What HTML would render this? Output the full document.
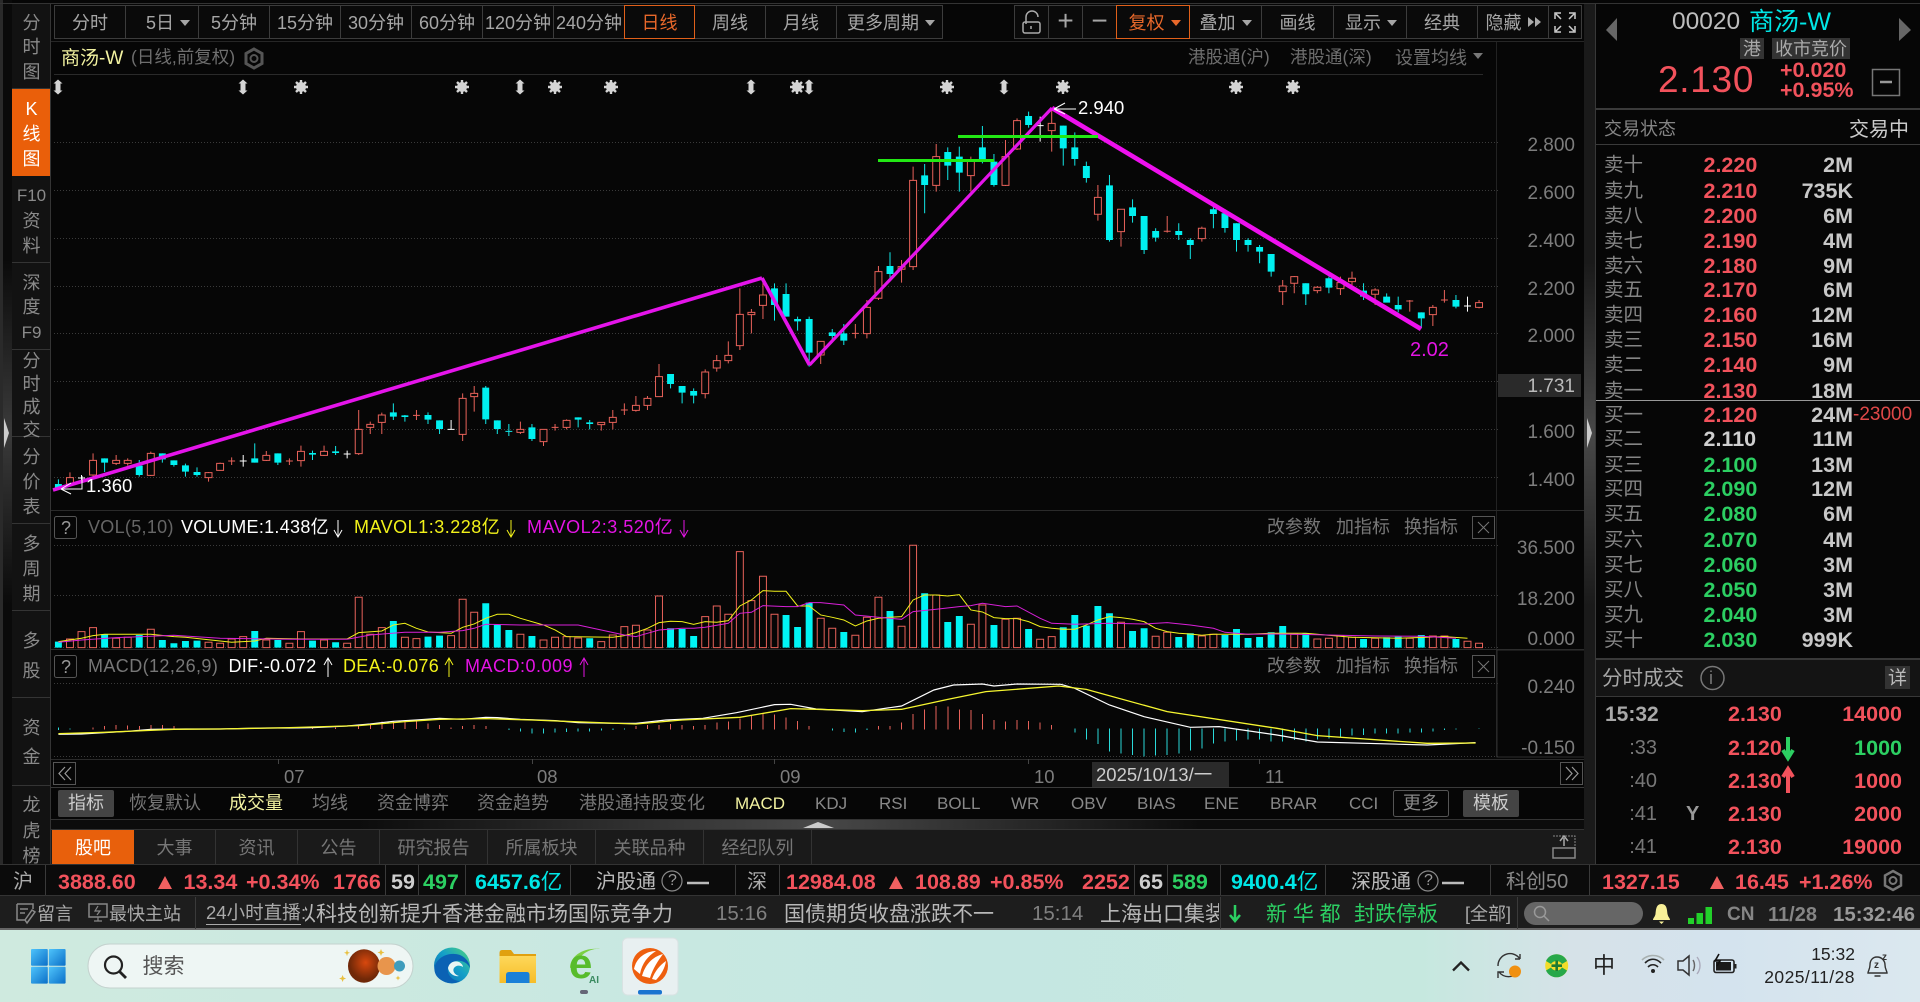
<!DOCTYPE html>
<html lang="zh"><head><meta charset="utf-8"><title>商汤-W</title>
<style>
*{box-sizing:border-box;margin:0;padding:0}
html,body{width:1920px;height:1002px;overflow:hidden;background:#060606}
body{position:relative;font-family:"Liberation Sans","Noto Sans CJK SC",sans-serif;color:#a6a6a6}
.t{position:absolute;white-space:nowrap;line-height:1;font-size:18px}
.a{position:absolute}
.b{position:absolute;top:5px;height:34px;border:1px solid #3c3c3c;background:#0a0a0a;text-align:center;line-height:34px;font-size:18px;color:#a6a6a6;white-space:nowrap;overflow:hidden}
.c{display:inline-block;width:0;height:0;border:5px solid transparent;border-top:6px solid currentColor;border-bottom:0;vertical-align:3px;margin-left:6px}
.rr{display:inline-block;width:0;height:0;border:5.5px solid transparent;border-left:6px solid #aaa;border-right:0;vertical-align:2px;margin-left:1px}
.s{position:absolute;left:12px;width:39px;text-align:center;font-size:18px;line-height:1;color:#8a8a8a}
.sc{position:absolute;left:12px;width:38px;background:#121212;border-bottom:1px solid #343434}
.ax{position:absolute;right:345px;font-size:19px;line-height:1;color:#7d7d7d;white-space:nowrap}
.ob{position:absolute;left:1604px;width:316px;height:22px;line-height:22px;white-space:nowrap}
.ob span{position:absolute;top:0}
.ob .l{left:0;font-size:19.5px;color:#858585}
.ob .p{left:99.5px;font-size:21.5px;font-weight:bold}
.ob .v{right:67px;font-size:21.5px;font-weight:bold;color:#c8c8c8}
.R{color:#f2525c}.G{color:#2ccf62}.W{color:#cfcfcf}.Y{color:#f2f2a0}.C{color:#00e6e6}
.m{font-weight:bold;font-size:21.5px}
.ft{position:absolute;font-size:20.5px;line-height:1;white-space:nowrap}
.tab{position:absolute;top:830px;height:34px;line-height:37px;font-size:18px;text-align:center;color:#777;border-right:1px solid #333}
#v{position:absolute;left:0;top:0}
.g path{vector-effect:non-scaling-stroke}
.cr path{shape-rendering:crispEdges}
</style></head><body>

<!-- backgrounds -->
<div class="a" style="left:0;top:0;width:12px;height:864px;background:linear-gradient(#0a0a0a 30%,#3a3a3a 50%,#0a0a0a 70%)"></div>
<div class="a" style="left:0;top:0;width:3px;height:864px;background:#2a2a2a"></div>
<div class="a" style="left:0;top:3px;width:1920px;height:1px;background:#333"></div>
<div class="a" style="left:1584px;top:4px;width:12px;height:860px;background:linear-gradient(#1a1a1a 30%,#484848 50%,#1a1a1a 70%)"></div>
<div class="a" style="left:51px;top:41px;width:1533px;height:1px;background:#262626"></div>
<div class="a" style="left:54px;top:74px;width:1429px;height:1px;background:#2a2a2a"></div>
<div class="a" style="left:1496px;top:42px;width:1px;height:715px;background:#222"></div>
<div class="a" style="left:51px;top:510px;width:1533px;height:1px;background:#2a2a2a"></div>
<div class="a" style="left:51px;top:649px;width:1533px;height:1px;background:#2a2a2a"></div>
<div class="a" style="left:51px;top:759px;width:1533px;height:1px;background:#2a2a2a"></div>
<div class="a" style="left:51px;top:787px;width:1533px;height:1px;background:#3a3a3a"></div>
<div class="a" style="left:51px;top:819px;width:1533px;height:11px;background:linear-gradient(90deg,#0c0c0c 20%,#484848 50%,#0c0c0c 75%);border-top:1px solid #333;border-bottom:1px solid #333"></div>
<div class="a" style="left:51px;top:830px;width:1533px;height:34px;background:#1a1a1a"></div>
<div class="a" style="left:0;top:864px;width:1920px;height:32px;background:#0b0b0b;border-top:1px solid #333;border-bottom:1px solid #333"></div>
<div class="a" style="left:0;top:896px;width:1920px;height:34px;background:#1d1d1d;border-bottom:2px solid #666"></div>
<div class="a" style="left:0;top:930px;width:1920px;height:72px;background:linear-gradient(90deg,#cfeadf,#c5e7e2 50%,#c6e8df 74%,#d6e2e8 82%,#d4e3ee 90%,#dbe8ef)"></div>
<div class="a" style="left:1595px;top:4px;width:1px;height:860px;background:#383838"></div>
<div class="a" style="left:1596px;top:108px;width:324px;height:2px;background:#3a3a3a"></div>
<div class="a" style="left:1596px;top:144px;width:324px;height:1px;background:#3a3a3a"></div>
<div class="a" style="left:1596px;top:400px;width:324px;height:1px;background:#999"></div>
<div class="a" style="left:1596px;top:658px;width:324px;height:39px;background:#141414;border-top:2px solid #383838;border-bottom:1px solid #383838"></div>

<!-- sidebar -->
<div class="sc" style="top:4px;height:85px"></div>
<div class="a" style="left:12px;top:89px;width:38px;height:87px;background:#ea5f0a"></div>
<div class="sc" style="top:176px;height:87px"></div>
<div class="sc" style="top:263px;height:87px"></div>
<div class="sc" style="top:350px;height:87px"></div>
<div class="sc" style="top:437px;height:87px"></div>
<div class="sc" style="top:524px;height:87px"></div>
<div class="sc" style="top:611px;height:87px"></div>
<div class="sc" style="top:698px;height:88px"></div>
<div class="sc" style="top:786px;height:78px;border-bottom:0"></div>
<div class="a" style="left:50px;top:4px;width:1px;height:860px;background:#343434"></div>
<div class="s" style="top:14px">分</div><div class="s" style="top:38px">时</div><div class="s" style="top:63px">图</div>
<div class="s" style="top:100px;color:#fff">K</div><div class="s" style="top:125px;color:#fff">线</div><div class="s" style="top:150px;color:#fff">图</div>
<div class="s" style="top:187px;font-size:17px">F10</div><div class="s" style="top:212px">资</div><div class="s" style="top:237px">料</div>
<div class="s" style="top:274px">深</div><div class="s" style="top:298px">度</div><div class="s" style="top:324px;font-size:17px">F9</div>
<div class="s" style="top:352px">分</div><div class="s" style="top:375px">时</div><div class="s" style="top:398px">成</div><div class="s" style="top:421px">交</div>
<div class="s" style="top:448px">分</div><div class="s" style="top:473px">价</div><div class="s" style="top:498px">表</div>
<div class="s" style="top:535px">多</div><div class="s" style="top:560px">周</div><div class="s" style="top:585px">期</div>
<div class="s" style="top:632px">多</div><div class="s" style="top:662px">股</div>
<div class="s" style="top:719px">资</div><div class="s" style="top:748px">金</div>
<div class="s" style="top:796px">龙</div><div class="s" style="top:822px">虎</div><div class="s" style="top:847px">榜</div>

<!-- toolbar -->
<div class="b" style="left:54px;width:72px">分时</div>
<div class="b" style="left:125px;width:74px;padding-left:12px">5日<span class="c"></span></div>
<div class="b" style="left:198px;width:72px">5分钟</div>
<div class="b" style="left:269px;width:72px">15分钟</div>
<div class="b" style="left:340px;width:72px">30分钟</div>
<div class="b" style="left:411px;width:72px">60分钟</div>
<div class="b" style="left:482px;width:72px">120分钟</div>
<div class="b" style="left:553px;width:72px">240分钟</div>
<div class="b" style="left:624px;width:71px;border-color:#e0601a;color:#e8682a;z-index:2">日线</div>
<div class="b" style="left:694px;width:72px">周线</div>
<div class="b" style="left:765px;width:72px">月线</div>
<div class="b" style="left:836px;width:107px;padding-left:3px">更多周期<span class="c"></span></div>
<div class="b" style="left:1014px;width:35px"></div>
<div class="b" style="left:1048px;width:35px;font-size:28px;line-height:29px">+</div>
<div class="b" style="left:1082px;width:35px;font-size:28px;line-height:29px">−</div>
<div class="b" style="left:1116px;width:74px;border-color:#e0601a;color:#e8682a;z-index:2;padding-left:3px">复权<span class="c"></span></div>
<div class="b" style="left:1189px;width:73px">叠加<span class="c"></span></div>
<div class="b" style="left:1261px;width:73px">画线</div>
<div class="b" style="left:1333px;width:74px;padding-left:2px">显示<span class="c"></span></div>
<div class="b" style="left:1406px;width:72px">经典</div>
<div class="b" style="left:1477px;width:72px">隐藏<span class="rr" style="margin-left:6px"></span><span class="rr"></span></div>
<div class="b" style="left:1548px;width:34px"></div>

<!-- title row -->
<div class="t Y" style="left:61px;top:49px;font-size:19px">商汤-W</div>
<div class="t" style="left:131px;top:49px;color:#6e6e6e;font-size:17.5px">(日线,前复权)</div>
<div class="t" style="left:1188px;top:49px;color:#6e6e6e;font-size:17.5px">港股通(沪)</div>
<div class="t" style="left:1290px;top:49px;color:#6e6e6e;font-size:17.5px">港股通(深)</div>
<div class="t" style="left:1395px;top:49px;color:#6e6e6e">设置均线</div>
<div class="t" style="left:1467px;top:47px;color:#777"><span class="c"></span></div>

<!-- vector layer -->
<svg id="v" width="1920" height="1002" viewBox="0 0 1920 1002" fill="none">
<defs>
<g id="sun" stroke="#d4d4d4" stroke-width="2.4"><circle r="5" fill="#d4d4d4" stroke="none"/><path d="M0-7V7M-7 0H7M-5-5L5 5M-5 5L5-5"/></g>
<path id="ud" d="M0-7.5L4.500-3.500H2.500V3.500H4.500L0 7.500L-4.500 3.500H-2.500V-3.500H-4.500Z" fill="#d4d4d4"/>
<linearGradient id="win" x1="0" y1="0" x2="1" y2="1"><stop offset="0" stop-color="#4fc4fb"/><stop offset="1" stop-color="#0a6fc8"/></linearGradient>
<linearGradient id="edge" x1="1" y1="0" x2="0" y2="1"><stop offset="0" stop-color="#4ed47c"/><stop offset=".45" stop-color="#14a0c8"/><stop offset="1" stop-color="#0a5fb0"/></linearGradient>
<radialGradient id="pl" cx=".55" cy=".4"><stop offset="0" stop-color="#d8480e"/><stop offset="1" stop-color="#702808"/></radialGradient>
<linearGradient id="fol" x1="0" y1="0" x2="0" y2="1"><stop offset="0" stop-color="#fdd75a"/><stop offset="1" stop-color="#f7bd28"/></linearGradient>
</defs>

<!-- grid -->
<g stroke="#3a3a3a" stroke-dasharray="1 2">
<path d="M54 142.5H1500M54 190.5H1500M54 238.5H1500M54 286.5H1500M54 333.5H1500M54 381.5H1500M54 429.5H1500M54 477.5H1500M54 545.5H1500M54 595.5H1500M54 647.5H1500M54 683.5H1500M54 756.5H1500"/>
</g>
<path d="M1497 650V757H1584M1497 650H1584" stroke="#2f2f2f"/>

<!-- signal marks row -->
<use href="#ud" x="58" y="87"/><use href="#ud" x="243" y="87"/><use href="#sun" x="301" y="87"/><use href="#sun" x="462" y="87"/><use href="#ud" x="520" y="87"/><use href="#sun" x="555" y="87"/><use href="#sun" x="611" y="87"/><use href="#ud" x="751" y="87"/><use href="#sun" x="797" y="87"/><use href="#ud" x="809" y="87"/><use href="#sun" x="947" y="87"/><use href="#ud" x="1004" y="87"/><use href="#sun" x="1063" y="87"/><use href="#sun" x="1236" y="87"/><use href="#sun" x="1293" y="87"/>

<!-- candles i=0..70 -->
<g class="g" transform="translate(58.4 300) scale(11.55 .3333)">
<path stroke="#e8625a" d="M1 517V560M3 460V530M5 465V495M6 475V497M8 455V528M13 516V545M14 488V512M15 472V495M14.7 483h.6M18 453V483M20 475V495M19.7 483h.6M21 437V500M23 437V468M26 330V465M27 365V402M28 338V402M31 330V360M30.7 346h.6M35 280V423M36 258V335M40 365V402M42 388V438M43 372V392M42.7 382h.6M44 358V388M47 367V392M48 330V388M49 310V345M48.7 330h.6M50 288V335M51 288V330M52 192V290M56 208V295M57 165V215M58 124V190M59 -35V150M60 27V100M61 -65V57M66 124V192M69 72V115M68.7 100h.6M70 0V115"/>
<path stroke="#e8625a" fill="#060606" d="M.7 533h.6v19h-.6zM2.7 481h.6v44h-.6zM4.7 481h.6v9h-.6zM5.7 481h.6v9h-.6zM7.7 460h.6v66h-.6zM12.7 518h.6v15h-.6zM13.7 490h.6v21h-.6zM17.7 466h.6v15h-.6zM20.7 454h.6v28h-.6zM22.7 454h.6v12h-.6zM25.7 388h.6v73h-.6zM26.7 373h.6v9h-.6zM27.7 345h.6v22h-.6zM34.7 295h.6v108h-.6zM35.7 280h.6v10h-.6zM39.7 388h.6v9h-.6zM41.7 388h.6v37h-.6zM43.7 361h.6v21h-.6zM46.7 367h.6v7h-.6zM47.7 352h.6v15h-.6zM49.7 316h.6v15h-.6zM50.7 295h.6v21h-.6zM51.7 230h.6v60h-.6zM55.7 216h.6v65h-.6zM56.7 182h.6v22h-.6zM57.7 166h.6v16h-.6zM58.7 43h.6v94h-.6zM59.7 37h.6v7h-.6zM60.7 -15h.6v31h-.6zM65.7 124h.6v41h-.6zM69.7 22h.6v79h-.6z"/>
<path stroke="#12e6e6" d="M0 538V570M4 475V516M7 480V530M9 460V488M10 481V500M11 491V530M12 502V530M17 430V488M19 460V495M22 452V480M24 438V465M29 310V360M30 345V365M32 337V372M33 361V402M37 258V372M38 361V402M39 372V408M38.7 394h.6M41 372V423M45 352V382M46 360V388M53 222V265M54 258V310M55 265V310M62 -50V62M63 -50V50M64 50V92M65 50V200M67 87V128M68 72V135"/>
<path fill="#00f0f0" d="M-.3 552h.6v13h-.6zM3.7 475h.6v13h-.6zM6.7 497h.6v28h-.6zM8.7 460h.6v18h-.6zM9.7 481h.6v14h-.6zM10.7 496h.6v19h-.6zM11.7 516h.6v9h-.6zM16.7 475h.6v13h-.6zM18.7 460h.6v28h-.6zM21.7 459h.6v5h-.6zM23.7 454h.6v5h-.6zM28.7 337h.6v13h-.6zM29.7 346h.6v5h-.6zM31.7 345h.6v14h-.6zM32.7 361h.6v26h-.6zM36.7 263h.6v95h-.6zM37.7 361h.6v26h-.6zM40.7 382h.6v35h-.6zM44.7 352h.6v7h-.6zM45.7 367h.6v5h-.6zM52.7 222h.6v30h-.6zM53.7 258h.6v20h-.6zM54.7 273h.6v14h-.6zM61.7 -35h.6v50h-.6zM62.7 -18h.6v68h-.6zM63.7 57h.6v7h-.6zM64.7 57h.6v101h-.6zM66.7 97h.6v11h-.6zM67.7 100h.6v22h-.6z"/>
<path stroke="#fff" d="M2 525V548M1.7 534h.6M16 465V500M15.7 483h.6M25 452V475M24.7 462h.6M34 360V388M33.7 388h.6"/>
</g>
<!-- candles i=71..114 -->
<g class="g" transform="translate(58.4 0) scale(11.55 .3333)">
<path stroke="#e8625a" d="M71 798V900M73 780V848M74 500V810M76 432V575M79 470V575M82 420V558M83 355V450M86 330V455M90 555V662M92 628V740M96 648V698M95.7 694h.6M99 680V725M106 840V915M107 828V880M109 858V880M111 830V885M112 815V855M114 865V915"/>
<path stroke="#e8625a" fill="#060606" d="M70.7 815h.6v80h-.6zM72.7 800h.6v8h-.6zM73.7 541h.6v259h-.6zM75.7 470h.6v86h-.6zM78.7 480h.6v47h-.6zM81.7 470h.6v86h-.6zM82.7 362h.6v85h-.6zM85.7 370h.6v22h-.6zM89.7 592h.6v51h-.6zM91.7 628h.6v67h-.6zM98.7 685h.6v31h-.6zM105.7 858h.6v17h-.6zM106.7 830h.6v20h-.6zM108.7 862h.6v10h-.6zM110.7 848h.6v18h-.6zM111.7 835h.6v10h-.6zM113.7 870h.6v13h-.6z"/>
<path stroke="#12e6e6" d="M72 757V835M75 492V640M77 442V540M78 440V575M80 378V490M81 462V560M84 335V383M87 377V497M88 397V497M89 485V548M91 525V725M93 598V668M94 648V762M95 685V725M97 670V720M98 715V777M100 620V685M101 628V698M102 670V755M103 715V755M104 735V790M105 762V830M108 850V915M110 830V880M113 850V900"/>
<path fill="#00f0f0" d="M71.7 798h.6v24h-.6zM74.7 526h.6v29h-.6zM76.7 456h.6v41h-.6zM77.7 470h.6v48h-.6zM79.7 442h.6v38h-.6zM80.7 485h.6v70h-.6zM83.7 348h.6v27h-.6zM86.7 377h.6v68h-.6zM87.7 442h.6v35h-.6zM88.7 498h.6v36h-.6zM90.7 556h.6v164h-.6zM92.7 622h.6v26h-.6zM93.7 648h.6v102h-.6zM94.7 693h.6v20h-.6zM96.7 693h.6v12h-.6zM97.7 720h.6v15h-.6zM99.7 628h.6v14h-.6zM100.7 640h.6v44h-.6zM101.7 670h.6v50h-.6zM102.7 720h.6v15h-.6zM103.7 741h.6v14h-.6zM104.7 762h.6v53h-.6zM107.7 850h.6v33h-.6zM109.7 835h.6v28h-.6zM112.7 872h.6v18h-.6z"/>
<path stroke="#fff" d="M85 350V425M84.7 377h.6"/>
</g>
<!-- candles i=115..123 -->
<g class="g" transform="translate(58.4 300) scale(11.55 .3333)">
<path stroke="#12e6e6" d="M115 -20V5M116 -10V37M118 37V85M121 -15V25"/>
<path fill="#00f0f0" d="M114.7 -10h.6v18h-.6zM115.7 15h.6v13h-.6zM117.7 37h.6v18h-.6zM120.7 0h.6v20h-.6z"/>
<path stroke="#e8625a" d="M117 0V35M116.7 3h.6M119 15V78M120 -30V8M119.7 0h.6M123 0V25"/>
<path stroke="#e8625a" fill="#060606" d="M118.7 22h.6v22h-.6zM122.7 8h.6v14h-.6z"/>
<path stroke="#fff" d="M122 -10V35M121.7 18h.6"/>
</g>

<!-- trend lines -->
<path d="M53 490L762 278" stroke="#e414ea" stroke-width="3.6"/>
<path d="M762 278L809.5 365" stroke="#e414ea" stroke-width="3.6"/>
<path d="M809.5 365L1052 108" stroke="#e414ea" stroke-width="3.2"/>
<path d="M1052 108L1421 329" stroke="#ee10ee" stroke-width="4.6"/>
<path d="M878 160.5H994M958 136.5H1098" stroke="#22e814" stroke-width="3"/>
<path d="M61 489H82V476M61 489L71 483M61 489L71 494M1054 109H1076M1054 109L1065 103M1054 109L1065 114" stroke="#fff" stroke-width="1"/>

<!-- volume -->
<g class="g" transform="translate(58.4 300) scale(11.55 .3333)">
<path stroke="#e8625a" d="M.7 1017h.6V1043h-.6zM1.7 995h.6V1043h-.6zM2.7 983h.6V1043h-.6zM4.7 1015h.6V1043h-.6zM5.7 1012h.6V1043h-.6zM7.7 988h.6V1043h-.6zM12.7 1027h.6V1043h-.6zM13.7 1030h.6V1043h-.6zM14.7 1017h.6V1043h-.6zM15.7 1010h.6V1043h-.6zM17.7 1020h.6V1043h-.6zM19.7 1030h.6V1043h-.6zM20.7 995h.6V1043h-.6zM22.7 1020h.6V1043h-.6zM24.7 1030h.6V1043h-.6zM25.7 892h.6V1043h-.6zM26.7 1003h.6V1043h-.6zM27.7 983h.6V1043h-.6zM29.7 1012h.6V1043h-.6zM30.7 1016h.6V1043h-.6zM33.7 1007h.6V1043h-.6zM34.7 898h.6V1043h-.6zM35.7 937h.6V1043h-.6zM39.7 1003h.6V1043h-.6zM41.7 1020h.6V1043h-.6zM42.7 1012h.6V1043h-.6zM43.7 1010h.6V1043h-.6zM44.7 1014h.6V1043h-.6zM46.7 1025h.6V1043h-.6zM47.7 1005h.6V1043h-.6zM48.7 980h.6V1043h-.6zM49.7 976h.6V1043h-.6zM50.7 990h.6V1043h-.6zM51.7 888h.6V1043h-.6zM55.7 950h.6V1043h-.6zM56.7 918h.6V1043h-.6zM57.7 943h.6V1043h-.6zM58.7 755h.6V1043h-.6zM59.7 902h.6V1043h-.6zM60.7 829h.6V1043h-.6zM61.7 943h.6V1043h-.6zM65.7 955h.6V1043h-.6zM66.7 985h.6V1043h-.6zM68.7 1006h.6V1043h-.6zM69.7 952h.6V1043h-.6zM70.7 892h.6V1043h-.6zM72.7 979h.6V1043h-.6zM73.7 736h.6V1043h-.6zM75.7 885h.6V1043h-.6zM78.7 973h.6V1043h-.6zM79.7 915h.6V1043h-.6zM81.7 958h.6V1043h-.6zM82.7 955h.6V1043h-.6zM84.7 1018h.6V1043h-.6zM85.7 1010h.6V1043h-.6zM91.7 967h.6V1043h-.6zM94.7 1009h.6V1043h-.6zM95.7 997h.6V1043h-.6zM98.7 1008h.6V1043h-.6zM99.7 1003h.6V1043h-.6zM106.7 1003h.6V1043h-.6zM108.7 1017h.6V1043h-.6zM109.7 1015h.6V1043h-.6zM110.7 1007h.6V1043h-.6zM111.7 1012h.6V1043h-.6zM113.7 1015h.6V1043h-.6zM116.7 1015h.6V1043h-.6zM118.7 1008h.6V1043h-.6zM119.7 1008h.6V1043h-.6zM121.7 1024h.6V1043h-.6zM122.7 1030h.6V1043h-.6z"/>
<path fill="#00f4f4" d="M-.3 1025h.6V1043h-.6zM3.7 1003h.6V1043h-.6zM6.7 1005h.6V1043h-.6zM8.7 1020h.6V1043h-.6zM9.7 1030h.6V1043h-.6zM10.7 1023h.6V1043h-.6zM11.7 1022h.6V1043h-.6zM16.7 993h.6V1043h-.6zM18.7 1020h.6V1043h-.6zM21.7 1022h.6V1043h-.6zM23.7 1027h.6V1043h-.6zM28.7 963h.6V1043h-.6zM31.7 1010h.6V1043h-.6zM32.7 1007h.6V1043h-.6zM36.7 910h.6V1043h-.6zM37.7 975h.6V1043h-.6zM38.7 990h.6V1043h-.6zM40.7 1008h.6V1043h-.6zM45.7 1015h.6V1043h-.6zM52.7 985h.6V1043h-.6zM53.7 987h.6V1043h-.6zM54.7 1008h.6V1043h-.6zM62.7 945h.6V1043h-.6zM63.7 981h.6V1043h-.6zM64.7 908h.6V1043h-.6zM67.7 996h.6V1043h-.6zM71.7 933h.6V1043h-.6zM74.7 880h.6V1043h-.6zM76.7 966h.6V1043h-.6zM77.7 948h.6V1043h-.6zM80.7 975h.6V1043h-.6zM83.7 987h.6V1043h-.6zM86.7 982h.6V1043h-.6zM87.7 945h.6V1043h-.6zM88.7 977h.6V1043h-.6zM89.7 918h.6V1043h-.6zM90.7 940h.6V1043h-.6zM92.7 993h.6V1043h-.6zM93.7 985h.6V1043h-.6zM96.7 1011h.6V1043h-.6zM97.7 1000h.6V1043h-.6zM100.7 1005h.6V1043h-.6zM101.7 987h.6V1043h-.6zM102.7 1014h.6V1043h-.6zM103.7 1011h.6V1043h-.6zM104.7 997h.6V1043h-.6zM105.7 978h.6V1043h-.6zM107.7 1000h.6V1043h-.6zM112.7 1017h.6V1043h-.6zM114.7 1012h.6V1043h-.6zM115.7 1010h.6V1043h-.6zM117.7 1005h.6V1043h-.6zM120.7 1017h.6V1043h-.6z"/>
<path stroke="#f2f21a" d="M0 1025L2 1015L3 1007L4 1003L8 1003L10 1010L11 1012L14 1023L15 1027L17 1023L18 1015L21 1017L25 1017L26 998L28 993L29 975L30 970L31 985L32 996L34 1000L35 982L36 972L37 955L38 943L39 943L40 955L42 975L43 990L44 1010L48 1012L49 1007L50 998L51 985L52 968L53 964L54 965L55 973L56 965L57 967L58 962L59 918L60 900L61 872L62 874L63 874L64 918L65 918L66 945L67 952L68 960L69 978L70 963L71 955L72 952L73 950L74 900L75 885L76 885L77 888L78 884L79 930L80 936L81 953L82 956L83 956L84 965L85 980L86 985L87 988L88 988L89 975L90 960L91 950L92 953L93 958L94 965L95 985L96 995L97 1000L98 1002L99 1006L100 1003L103 1003L105 1000L108 1000L112 1012L116 1015L120 1010L122 1015"/>
<path stroke="#d820d8" d="M0 1027L2 1020L5 1013L10 1006L14 1015L20 1018L25 1018L27 1005L30 997L33 997L35 992L36 985L37 973L40 975L45 975L47 990L49 1005L50 1010L51 1000L52 990L54 985L55 985L56 982L58 970L59 940L60 937L61 917L63 920L64 920L65 908L66 908L68 915L69 945L71 952L73 958L74 935L76 928L78 920L79 917L80 910L82 920L83 918L85 955L86 970L88 973L91 970L94 972L96 968L98 975L100 985L101 997L103 1003L105 1002L107 1003L110 1005L114 1008L118 1009L121 1015"/>
</g>

<!-- macd -->
<g class="g cr" transform="translate(58.4 640) scale(11.55 .3333)">
<path stroke="#e8625a" d="M3 262V268M4 258V268M5 255V268M6 256V268M7 258V268M8 255V268M9 255V268M10 258V268M22 260V267M24 262V267M26 255V267M27 250V267M28 245V267M29 245V267M30 245V267M31 245V267M32 250V267M33 255V267M34 262V267M35 258V267M36 255V267M37 258V267M50 258V267M51 255V267M52 255V268M53 252V268M54 255V268M55 258V268M56 255V268M57 248V268M58 245V268M59 235V268M60 228V268M61 222V268M62 224V268M63 232V268M64 243V268M65 258V268M71 258V268M72 258V268M73 248V268M74 222V268M75 208V268M76 198V268M77 200V268M78 208V268M79 210V268M80 222V268M81 240V268M82 245V268M83 240V268M84 243V268M85 248V268M86 255V268"/>
<path stroke="#2ad8d8" d="M0 263V270M1 265V268M39 265V270M40 265V274M41 265V280M42 265V280M43 265V278M44 265V276M45 265V275M46 265V274M47 265V272M48 265V270M49 265V268M67 265V272M68 265V276M69 265V278M70 265V270M88 265V278M89 265V298M90 265V312M91 265V335M92 265V340M93 265V345M94 265V350M95 265V347M96 265V345M97 265V340M98 265V332M99 265V325M100 265V310M101 265V305M102 265V302M103 265V298M104 265V298M105 265V305M106 265V305M107 265V300M108 265V305M109 265V298M110 265V296M111 265V292M112 265V286M113 265V285M114 265V280M115 265V280M116 265V280M117 265V278M118 265V278M119 265V275M120 265V270M121 265V268M123 265V267"/>
</g>
<g class="g" transform="translate(58.4 640) scale(11.55 .3333)">
<path stroke="#fff" stroke-width="1.2" d="M0 283L2 282L4 278L6 274L8 268L11 267L14 267L18 264L20 264L22 263L25 258L27 252L29 244L31 240L33 235L35 238L37 232L38 233L40 238L43 242L45 248L48 250L50 250L52.6 240L55.8 235L58.7 218L62 194L63.4 193L65.6 207L69.6 215L73 198L75.8 150L77.5 135L80 132L81 138L83 132L86.8 133L88 145L91 195L94 230L98 262L100.5 260L105.5 285L109 306L118.5 315L122.7 308"/>
<path stroke="#f6f630" stroke-width="1.300" d="M0 281L4 277L10 268L14 267L20 263L26 257L30 245L33 238L37 236L41 240L46 247L50 252L54 240L59 232L63.4 206L65.6 208L69.6 212L73 208L77 178L80.3 155L86.6 138L89 148L96 215L105.5 265L109 287L118.5 310L122.7 309"/>
</g>

<!-- head arrows -->
<path d="M338 520V537M334 530L338 537L342 530" stroke="#fff"/>
<path d="M511 520V537M507 530L511 537L515 530" stroke="#f2f21a"/>
<path d="M684 520V537M680 530L684 537L688 530" stroke="#e414e4"/>
<path d="M328 677V658M324 665L328 658L332 665" stroke="#fff"/>
<path d="M449 677V658M445 665L449 658L453 665" stroke="#f2f21a"/>
<path d="M584 677V658M580 665L584 658L588 665" stroke="#e414e4"/>

<!-- question/close boxes -->
<rect x="54.5" y="516.5" width="22" height="22" rx="2" stroke="#555"/>
<rect x="54.5" y="655.5" width="22" height="22" rx="2" stroke="#555"/>
<rect x="1472.5" y="516.5" width="22" height="22" stroke="#555"/><path d="M1478 522L1489 533M1489 522L1478 533" stroke="#777"/>
<rect x="1472.5" y="655.5" width="22" height="22" stroke="#555"/><path d="M1478 661L1489 672M1489 661L1478 672" stroke="#777"/>

<!-- gear -->
<path d="M254 49l8 4.5v10l-8 4.5-8-4.5v-10z" stroke="#555" stroke-width="3"/><circle cx="254" cy="58.5" r="3.5" stroke="#555" stroke-width="2"/>

<!-- toolbar icons -->
<path d="M1026 24V17a6 6 0 0 1 12 0" stroke="#aaa" stroke-width="1.5"/><rect x="1023" y="22" width="17" height="11" rx="2" stroke="#aaa" stroke-width="1.5"/><path d="M1031 26V29" stroke="#aaa" stroke-width="1.5"/>
<path d="M1555 19V13H1561M1575 19V13H1569M1555 26V32H1561M1575 26V32H1569M1556 14L1561 19M1574 14L1569 19M1556 31L1561 26M1574 31L1569 26" stroke="#ccc" stroke-width="1.5"/>

<!-- handles -->
<path d="M4 418L9 433L4 448Z" fill="#ccc"/>
<path d="M1587 418L1592 433L1587 448Z" fill="#ccc"/>
<path d="M803 828H834L818 822Z" fill="#ccc"/>
<path d="M1617 18V41L1606 30Z" fill="#666"/>
<path d="M1899 18V41L1911 30Z" fill="#666"/>
<rect x="1872.5" y="69.5" width="27" height="26" stroke="#777" stroke-width="1.5"/><path d="M1880 82H1892" stroke="#999" stroke-width="2.5"/>

<!-- axis bits -->
<path d="M278.5 759V764M532.5 759V764M774.5 759V764M1028.5 759V764M1259.5 759V764" stroke="#444"/>
<rect x="53.5" y="762.5" width="22" height="22" stroke="#555"/><path d="M65 767L59 773.5L65 780M71 767L65 773.5L71 780" stroke="#999" stroke-width="1.2"/>
<rect x="1560.5" y="762.5" width="22" height="22" stroke="#555"/><path d="M1566 767L1572 773.5L1566 780M1572 767L1578 773.5L1572 780" stroke="#999" stroke-width="1.2"/>
<rect x="1393.5" y="790.5" width="55" height="26" rx="2" stroke="#555"/>
<!-- tabs icon -->
<path d="M1553 836H1575V850" stroke="#888" stroke-dasharray="2 1"/><rect x="1553" y="848" width="22" height="10" stroke="#888" stroke-width="1.5"/><path d="M1564 846V838M1560 841L1564 836L1568 841" stroke="#aaa" stroke-width="1.5"/>

<!-- status bar -->
<path d="M45.5 865V895M385.5 865V895M418.5 865V895M465.5 865V895M570.5 865V895M735.5 865V895M779.5 865V895M1134.5 865V895M1167.5 865V895M1220.5 865V895M1325.5 865V895M1490.5 865V895M1589.5 865V895M195.5 897V929M1220.5 897V929M1517.5 897V929" stroke="#3a3a3a"/>
<path d="M165 876L172 889H158ZM896 876L903 889H889ZM1717 876L1724 889H1710Z" fill="#f06060"/>
<circle cx="672" cy="881" r="10" stroke="#888" stroke-width="1.2"/><circle cx="1428" cy="881" r="10" stroke="#888" stroke-width="1.2"/>
<path d="M687 883H709M1442 883H1464" stroke="#bbb" stroke-width="2.5"/>
<path d="M1893 871l8 4.5v10l-8 4.5-8-4.5v-10z" stroke="#777" stroke-width="2.5"/><circle cx="1893" cy="880.5" r="3.5" stroke="#777" stroke-width="2"/>
<!-- second row icons -->
<path d="M17 904H33V909M17 904V920H25M20 909H28M20 913H25M27 923L35 912L32 910L25 920Z" stroke="#888" stroke-width="1.5"/>
<rect x="89" y="904" width="18" height="13" stroke="#888" stroke-width="1.5"/><path d="M98 906L95 911H100L97 915M94 921H102M98 917V921" stroke="#888" stroke-width="1.2"/>
<path d="M1235 905V920M1230 915L1235 921L1240 915" stroke="#2ccf62" stroke-width="2.5"/>
<rect x="1524" y="902" width="119" height="23" rx="11.5" fill="#666"/><circle cx="1540" cy="912" r="5.5" stroke="#999" stroke-width="1.5"/><path d="M1544 916L1549 921" stroke="#999" stroke-width="1.5"/>
<path d="M1661.500 904C1656 904 1656 910 1655.500 914C1655 917 1653 918 1653 920H1670C1670 918 1668 917 1667.500 914C1667 910 1667 904 1661.500 904ZM1659 921.500H1664L1661.500 924Z" fill="#f8f098"/>
<path d="M1688 918h6v6h-6zM1696.500 913h6.500v11h-6.500zM1705.500 907h6.500v17h-6.500z" fill="#22d02a"/>

<!-- arrows in trades -->
<path d="M1788 737V755M1783 750L1788 758L1793 750" stroke="#2ccf62" stroke-width="4"/>
<path d="M1788 793V771M1783 777L1788 769L1793 777" stroke="#f2525c" stroke-width="4"/>
<circle cx="1712.500" cy="678" r="11.500" stroke="#777" stroke-width="1.500"/>
<rect x="1885" y="666" width="25" height="23" fill="#333"/>

<!-- taskbar: start + search -->
<rect x="31" y="949" width="16.800" height="16.800" rx="1" fill="url(#win)"/><rect x="48.800" y="949" width="16.800" height="16.800" rx="1" fill="url(#win)"/><rect x="31" y="966.800" width="16.800" height="16.800" rx="1" fill="url(#win)"/><rect x="48.800" y="966.800" width="16.800" height="16.800" rx="1" fill="url(#win)"/>
<rect x="88" y="944" width="325" height="44" rx="22" fill="#eef6f4" stroke="#c4d2ce"/>
<circle cx="113.500" cy="965" r="8.500" stroke="#222" stroke-width="2.200"/><path d="M119.500 971.500L126 978" stroke="#222" stroke-width="2.800"/>
<ellipse cx="364" cy="966" rx="16" ry="16.700" fill="url(#pl)"/><circle cx="386.500" cy="966" r="9" fill="#e8954c"/><circle cx="399.500" cy="966" r="5.500" fill="#3f9cbc"/>
<path d="M347 949.500l.8 2.500 2.200.8-2.200.8-.8 2.500-.8-2.500-2.200-.8 2.200-.8zM381 949l1 2.500 2.500 1-2.500 1-1 2.500-1-2.500-2.500-1 2.500-1zM342.600 975l1 2.500 2.500 1-2.500 1-1 2.500-1-2.500-2.500-1 2.500-1zM398 975.500l.7 1.800 1.800.7-1.800.7-.7 1.800-.7-1.800-1.800-.7 1.800-.7z" fill="#e8c040"/>
<!-- edge -->
<circle cx="452" cy="965.500" r="18" fill="url(#edge)"/>
<path d="M434.500 968C436 958 448 951 460 955C467 958 470 964 470 968C467 962 461 960 456 961C450 962 447 967 448 972C449 977 454 981 460 981C455 984 447 984 441 980C436 977 434 972 434.500 968Z" fill="#0b62b4"/>
<path d="M448 968C449 963 454 960 459 962C461 963 463 965 463 967C460 965 456 965 454 968C452 971 455 975 459 976C455 977 449 974 448 968Z" fill="#e8f6f4"/>
<!-- folder -->
<path d="M499.500 953Q499.500 950 502 950H511L514 954H536V983H499.500Z" fill="#e0a010"/><path d="M499.500 956H536V983H499.500Z" fill="url(#fol)"/><path d="M509 972H527Q529.500 972 529.500 975V983H506V975Q506 972 509 972Z" fill="#1a80d8"/>
<!-- ie-like -->
<path d="M570 968C570 955 585 947 600 949C590 948 578 955 576 966" fill="#7cd044"/>
<text x="569" y="978" font-family="Liberation Sans" font-size="42" font-weight="bold" fill="#58bc2c">e</text>
<text x="589" y="983" font-family="Liberation Sans" font-size="10" font-weight="bold" fill="#3a8a60">AI</text>
<rect x="580" y="990" width="8" height="4" rx="2" fill="#667"/>
<!-- app tile -->
<rect x="622.500" y="938" width="55.500" height="57" rx="5" fill="#e8f0f1" stroke="#d8e2e2"/>
<ellipse cx="650" cy="966" rx="18" ry="18" fill="#ee5f0f"/>
<path d="M634 969C636 958 646 951 656 951C648 956 642 963 640 974Z" fill="#fff"/>
<path d="M642 976C645 965 652 957 663 954C658 961 653 968 650 978Z" fill="#fff"/>
<path d="M652 979C655 971 660 965 666 961C665 968 661 975 656 980Z" fill="#fff"/>
<rect x="638" y="990" width="24" height="4.500" rx="2" fill="#1a74d0"/>
<!-- tray -->
<path d="M1453 970.500L1461 962.500L1469 970.500" stroke="#222" stroke-width="2.300"/>
<path d="M1498 966A12 12 0 0 1 1520 959M1520 959V954M1520 959H1515M1518 972A12 12 0 0 1 1499 972M1498 978V972H1504" stroke="#333" stroke-width="1.400"/><circle cx="1515" cy="971.500" r="6" fill="#f09010"/>
<circle cx="1556.700" cy="965.700" r="11.500" fill="#f2dc2a"/>
<path d="M1546 961A11.500 11.500 0 0 1 1567 961L1562 964A6.500 6.500 0 0 0 1551 964ZM1546 970.500A11.500 11.500 0 0 0 1567 970.500L1562 967.500A6.500 6.500 0 0 1 1551 967.500Z" fill="#27a84a"/>
<path d="M1556.700 960.500V971M1551.500 965.700H1562" stroke="#1e7a32" stroke-width="2.600"/>
<path d="M1645 963C1650 958 1656 958 1661 963M1648 967C1651 964 1655 964 1658 967" stroke="#222" stroke-width="1.600"/><path d="M1642 960C1648 954 1658 954 1664 960" stroke="#a8b0b0" stroke-width="1.600"/><circle cx="1653" cy="971" r="2" fill="#222"/>
<path d="M1678 961H1683L1689 956V975L1683 970H1678Z" stroke="#333" stroke-width="1.500"/><path d="M1693 960C1695 963 1695 968 1693 971" stroke="#666" stroke-width="1.400"/><path d="M1697 957C1701 962 1701 969 1697 974" stroke="#aab" stroke-width="1.400"/>
<rect x="1714" y="960" width="20" height="12.500" rx="2" stroke="#222" stroke-width="1.600"/><rect x="1716" y="962" width="15" height="8.500" fill="#1a1a1a"/><path d="M1735.500 964V968.500" stroke="#222" stroke-width="2"/><path d="M1719 954L1715 961H1720L1717 966" stroke="#111" stroke-width="1.600"/>
<path d="M1877 957C1872 957 1870 961 1870 965C1870 969 1868 971 1868 973H1887C1887 971 1885 969 1885 965C1885 961 1882 957 1877 957ZM1874.500 976H1880.500" stroke="#333" stroke-width="1.400"/>
</svg>

<!-- candle labels -->
<div class="t" style="left:86px;top:477px;color:#fff;font-size:18.500px">1.360</div>
<div class="t" style="left:1078px;top:99px;color:#fff;font-size:18.500px">2.940</div>
<div class="t" style="left:1410px;top:340px;color:#e414e4;font-size:20px">2.02</div>

<!-- axis labels -->
<div class="ax" style="top:136px">2.800</div><div class="ax" style="top:184px">2.600</div><div class="ax" style="top:232px">2.400</div><div class="ax" style="top:280px">2.200</div><div class="ax" style="top:327px">2.000</div>
<div class="a" style="left:1498px;top:374px;width:83px;height:23px;background:#2a2a2a"></div>
<div class="ax" style="top:377px;color:#bbb">1.731</div><div class="ax" style="top:423px">1.600</div><div class="ax" style="top:471px">1.400</div>
<div class="ax" style="top:539px">36.500</div><div class="ax" style="top:590px">18.200</div><div class="ax" style="top:630px">0.000</div>
<div class="ax" style="top:678px">0.240</div><div class="ax" style="top:739px">-0.150</div>

<!-- vol header -->
<div class="t" style="left:61px;top:519px;color:#999">?</div>
<div class="t" style="left:88px;top:518px;color:#666;letter-spacing:.3px">VOL(5,10)</div>
<div class="t" style="left:181px;top:518px;color:#fff;letter-spacing:.3px">VOLUME:1.438亿</div>
<div class="t" style="left:354px;top:518px;color:#f2f21a;letter-spacing:.5px">MAVOL1:3.228亿</div>
<div class="t" style="left:527px;top:518px;color:#e414e4;letter-spacing:.5px">MAVOL2:3.520亿</div>
<div class="t" style="left:1267px;top:518px;color:#777">改参数</div><div class="t" style="left:1336px;top:518px;color:#777">加指标</div><div class="t" style="left:1404px;top:518px;color:#777">换指标</div>
<!-- macd header -->
<div class="t" style="left:61px;top:658px;color:#999">?</div>
<div class="t" style="left:88px;top:657px;color:#777;letter-spacing:.4px">MACD(12,26,9)</div>
<div class="t" style="left:228.500px;top:657px;color:#fff;letter-spacing:.3px">DIF:-0.072</div>
<div class="t" style="left:343px;top:657px;color:#f2f21a;letter-spacing:.3px">DEA:-0.076</div>
<div class="t" style="left:465px;top:657px;color:#e414e4;letter-spacing:.5px">MACD:0.009</div>
<div class="t" style="left:1267px;top:657px;color:#777">改参数</div><div class="t" style="left:1336px;top:657px;color:#777">加指标</div><div class="t" style="left:1404px;top:657px;color:#777">换指标</div>

<!-- date axis -->
<div class="t" style="left:284px;top:768px;color:#7d7d7d;font-size:18.500px">07</div>
<div class="t" style="left:537px;top:768px;color:#7d7d7d;font-size:18.500px">08</div>
<div class="t" style="left:780px;top:768px;color:#7d7d7d;font-size:18.500px">09</div>
<div class="t" style="left:1034px;top:768px;color:#7d7d7d;font-size:18.500px">10</div>
<div class="t" style="left:1265px;top:768px;color:#7d7d7d;font-size:18.500px">11</div>
<div class="a" style="left:1092px;top:762px;width:137px;height:25px;background:#2a2a2a"></div>
<div class="t" style="left:1096px;top:766px;color:#ccc;font-size:18.500px">2025/10/13/一</div>

<!-- indicator row -->
<div class="a" style="left:58px;top:790px;width:56px;height:27px;background:#444;border-radius:2px"></div>
<div class="a" style="left:1463px;top:790px;width:56px;height:27px;background:#444;border-radius:2px"></div>
<div class="t" style="left:68px;top:794px;color:#ccc">指标</div>
<div class="t" style="left:129px;top:794px;color:#777">恢复默认</div>
<div class="t Y" style="left:229px;top:794px">成交量</div>
<div class="t" style="left:312px;top:794px;color:#777">均线</div>
<div class="t" style="left:377px;top:794px;color:#777">资金博弈</div>
<div class="t" style="left:477px;top:794px;color:#777">资金趋势</div>
<div class="t" style="left:579px;top:794px;color:#777">港股通持股变化</div>
<div class="t Y" style="left:735px;top:795px;font-size:17px">MACD</div>
<div class="t" style="left:815px;top:795px;font-size:17px;color:#888">KDJ</div>
<div class="t" style="left:879px;top:795px;font-size:17px;color:#888">RSI</div>
<div class="t" style="left:937px;top:795px;font-size:17px;color:#888">BOLL</div>
<div class="t" style="left:1011px;top:795px;font-size:17px;color:#888">WR</div>
<div class="t" style="left:1071px;top:795px;font-size:17px;color:#888">OBV</div>
<div class="t" style="left:1137px;top:795px;font-size:17px;color:#888">BIAS</div>
<div class="t" style="left:1204px;top:795px;font-size:17px;color:#888">ENE</div>
<div class="t" style="left:1270px;top:795px;font-size:17px;color:#888">BRAR</div>
<div class="t" style="left:1349px;top:795px;font-size:17px;color:#888">CCI</div>
<div class="t" style="left:1403px;top:794px;color:#888">更多</div>
<div class="t" style="left:1473px;top:794px;color:#ccc">模板</div>

<!-- tabs -->
<div class="tab" style="left:52px;width:82px;background:#e8600c;color:#fff;border:0">股吧</div>
<div class="tab" style="left:134px;width:82px">大事</div>
<div class="tab" style="left:216px;width:82px">资讯</div>
<div class="tab" style="left:298px;width:82px">公告</div>
<div class="tab" style="left:380px;width:108px">研究报告</div>
<div class="tab" style="left:488px;width:108px">所属板块</div>
<div class="tab" style="left:596px;width:108px">关联品种</div>
<div class="tab" style="left:704px;width:108px">经纪队列</div>

<!-- right panel header -->
<div class="t" style="left:1672px;top:10px;font-size:24.500px;color:#bdbdbd">00020</div>
<div class="t C" style="left:1749px;top:10px;font-size:25px">商汤-W</div>
<div class="a" style="left:1740px;top:38px;width:24px;height:21px;background:#333"></div>
<div class="a" style="left:1772px;top:38px;width:78px;height:21px;background:#333"></div>
<div class="t" style="left:1743px;top:40px;color:#aaa">港</div>
<div class="t" style="left:1775px;top:40px;color:#aaa">收市竞价</div>
<div class="t" style="left:1658px;top:61px;font-size:37px;color:#f2525c;letter-spacing:.7px">2.130</div>
<div class="t R" style="left:1780px;top:60px;font-size:21.500px;font-weight:bold">+0.020</div>
<div class="t R" style="left:1780px;top:80px;font-size:21.500px;font-weight:bold">+0.95%</div>
<div class="t" style="left:1604px;top:120px;color:#858585">交易状态</div>
<div class="t" style="left:1849px;top:120px;font-size:20px;color:#ccc">交易中</div>

<!-- order book -->
<div class="ob" style="top:154px"><span class="l">卖十</span><span class="p R">2.220</span><span class="v">2M</span></div>
<div class="ob" style="top:179.500px"><span class="l">卖九</span><span class="p R">2.210</span><span class="v">735K</span></div>
<div class="ob" style="top:204.500px"><span class="l">卖八</span><span class="p R">2.200</span><span class="v">6M</span></div>
<div class="ob" style="top:229.500px"><span class="l">卖七</span><span class="p R">2.190</span><span class="v">4M</span></div>
<div class="ob" style="top:254.500px"><span class="l">卖六</span><span class="p R">2.180</span><span class="v">9M</span></div>
<div class="ob" style="top:279px"><span class="l">卖五</span><span class="p R">2.170</span><span class="v">6M</span></div>
<div class="ob" style="top:304px"><span class="l">卖四</span><span class="p R">2.160</span><span class="v">12M</span></div>
<div class="ob" style="top:329px"><span class="l">卖三</span><span class="p R">2.150</span><span class="v">16M</span></div>
<div class="ob" style="top:354px"><span class="l">卖二</span><span class="p R">2.140</span><span class="v">9M</span></div>
<div class="ob" style="top:379.500px"><span class="l">卖一</span><span class="p R">2.130</span><span class="v">18M</span></div>
<div class="ob" style="top:403.500px"><span class="l">买一</span><span class="p R">2.120</span><span class="v">24M</span><span style="left:249px;font-size:19px;color:#e04848">-23000</span></div>
<div class="ob" style="top:428px"><span class="l">买二</span><span class="p W">2.110</span><span class="v">11M</span></div>
<div class="ob" style="top:453.500px"><span class="l">买三</span><span class="p G">2.100</span><span class="v">13M</span></div>
<div class="ob" style="top:478px"><span class="l">买四</span><span class="p G">2.090</span><span class="v">12M</span></div>
<div class="ob" style="top:503px"><span class="l">买五</span><span class="p G">2.080</span><span class="v">6M</span></div>
<div class="ob" style="top:528.500px"><span class="l">买六</span><span class="p G">2.070</span><span class="v">4M</span></div>
<div class="ob" style="top:554px"><span class="l">买七</span><span class="p G">2.060</span><span class="v">3M</span></div>
<div class="ob" style="top:578.500px"><span class="l">买八</span><span class="p G">2.050</span><span class="v">3M</span></div>
<div class="ob" style="top:604px"><span class="l">买九</span><span class="p G">2.040</span><span class="v">3M</span></div>
<div class="ob" style="top:629px"><span class="l">买十</span><span class="p G">2.030</span><span class="v">999K</span></div>

<!-- time & sales -->
<div class="t" style="left:1602px;top:669px;font-size:20.500px;color:#a6a6a6">分时成交</div>
<div class="t" style="left:1709px;top:669px;font-size:18px;color:#777">i</div>
<div class="t" style="left:1888px;top:669px;font-size:19px;color:#bbb">详</div>

<div class="t" style="left:1605px;top:704px;font-size:21px;font-weight:bold;color:#a8a8a8">15:32</div>
<div class="t" style="right:263px;top:738px;font-size:20px;color:#777">:33</div>
<div class="t" style="right:263px;top:771px;font-size:20px;color:#777">:40</div>
<div class="t" style="right:263px;top:804px;font-size:20px;color:#777">:41</div>
<div class="t" style="right:263px;top:837px;font-size:20px;color:#777">:41</div>
<div class="t" style="left:1686px;top:804px;font-size:20px;font-weight:bold;color:#999">Y</div>
<div class="t R m" style="left:1728px;top:704px">2.130</div><div class="t R m" style="right:18px;top:704px">14000</div>
<div class="t R m" style="left:1728px;top:738px">2.120</div><div class="t G m" style="right:18px;top:738px">1000</div>
<div class="t R m" style="left:1728px;top:771px">2.130</div><div class="t R m" style="right:18px;top:771px">1000</div>
<div class="t R m" style="left:1728px;top:804px">2.130</div><div class="t R m" style="right:18px;top:804px">2000</div>
<div class="t R m" style="left:1728px;top:837px">2.130</div><div class="t R m" style="right:18px;top:837px">19000</div>

<!-- status row -->
<div class="t" style="left:13px;top:872px;font-size:20px;color:#aaa">沪</div>
<div class="t R m" style="left:58px;top:872px">3888.60</div>
<div class="t R m" style="left:183.500px;top:872px">13.34</div>
<div class="t R m" style="left:246px;top:872px">+0.34%</div>
<div class="t R m" style="left:333px;top:872px">1766</div>
<div class="t W m" style="left:391px;top:872px">59</div>
<div class="t G m" style="left:423px;top:872px">497</div>
<div class="t C m" style="left:475px;top:872px">6457.6<span style="font-weight:normal">亿</span></div>
<div class="t" style="left:596px;top:872px;font-size:20px;color:#bbb">沪股通</div>
<div class="t" style="left:668px;top:873px;font-size:16px;color:#999">?</div>
<div class="t" style="left:747px;top:872px;font-size:20px;color:#aaa">深</div>
<div class="t R m" style="left:786px;top:872px">12984.08</div>
<div class="t R m" style="left:915px;top:872px">108.89</div>
<div class="t R m" style="left:990px;top:872px">+0.85%</div>
<div class="t R m" style="left:1082px;top:872px">2252</div>
<div class="t W m" style="left:1139px;top:872px">65</div>
<div class="t G m" style="left:1172px;top:872px">589</div>
<div class="t C m" style="left:1231px;top:872px">9400.4<span style="font-weight:normal">亿</span></div>
<div class="t" style="left:1351px;top:872px;font-size:20px;color:#bbb">深股通</div>
<div class="t" style="left:1424px;top:873px;font-size:16px;color:#999">?</div>
<div class="t" style="left:1506px;top:872px;font-size:20px;color:#888">科创50</div>
<div class="t R m" style="left:1602px;top:872px">1327.15</div>
<div class="t R m" style="left:1735px;top:872px">16.45</div>
<div class="t R m" style="left:1799px;top:872px">+1.26%</div>

<!-- ticker row -->
<div class="t" style="left:37px;top:905px;color:#aaa">留言</div>
<div class="t" style="left:109px;top:905px;color:#aaa">最快主站</div>
<div class="t" style="left:206px;top:904px;font-size:18.500px;color:#aaa;border-bottom:1px solid #aaa;padding-bottom:1px">24小时直播</div>
<div class="t" style="left:301px;top:904px;font-size:18.500px;color:#aaa">:</div>
<div class="a" style="left:305px;top:900px;width:373px;height:28px;overflow:hidden"><div class="ft" style="left:-10px;top:4px;color:#b8b8b8;font-size:21px">以科技创新提升香港金融市场国际竞争力</div></div>
<div class="ft" style="left:716px;top:904px;color:#808080">15:16</div>
<div class="ft" style="left:784px;top:904px;color:#b8b8b8;font-size:21px">国债期货收盘涨跌不一</div>
<div class="ft" style="left:1032px;top:904px;color:#808080">15:14</div>
<div class="a" style="left:1100px;top:900px;width:119px;height:28px;overflow:hidden"><div class="ft" style="left:0;top:4px;color:#b8b8b8;font-size:21px">上海出口集装箱</div></div>
<div class="ft G" style="left:1266px;top:904px;font-size:21px">新 华 都</div>
<div class="ft G" style="left:1354px;top:904px;font-size:21px">封跌停板</div>
<div class="t" style="left:1465px;top:905px;color:#aaa">[全部]</div>
<div class="t" style="left:1727px;top:905px;font-size:19px;font-weight:bold;color:#858585">CN</div>
<div class="t" style="left:1768px;top:905px;font-size:20px;font-weight:bold;color:#858585">11/28</div>
<div class="t" style="left:1833px;top:905px;font-size:20.500px;font-weight:bold;color:#9a9a9a">15:32:46</div>

<!-- taskbar text -->
<div class="t" style="left:142.500px;top:956px;font-size:21px;color:#555">搜索</div>
<div class="t" style="left:1593px;top:955px;font-size:22px;color:#222">中</div>
<div class="t" style="right:65px;top:945.500px;font-size:17.500px;color:#222">15:32</div>
<div class="t" style="right:65px;top:969px;font-size:17.500px;color:#222;letter-spacing:.45px">2025/11/28</div>
<div class="t" style="left:1874px;top:961px;font-size:10px;font-weight:bold;color:#333">z</div>
<div class="t" style="left:1882px;top:953px;font-size:10px;font-weight:bold;color:#333">z</div>
</body></html>
